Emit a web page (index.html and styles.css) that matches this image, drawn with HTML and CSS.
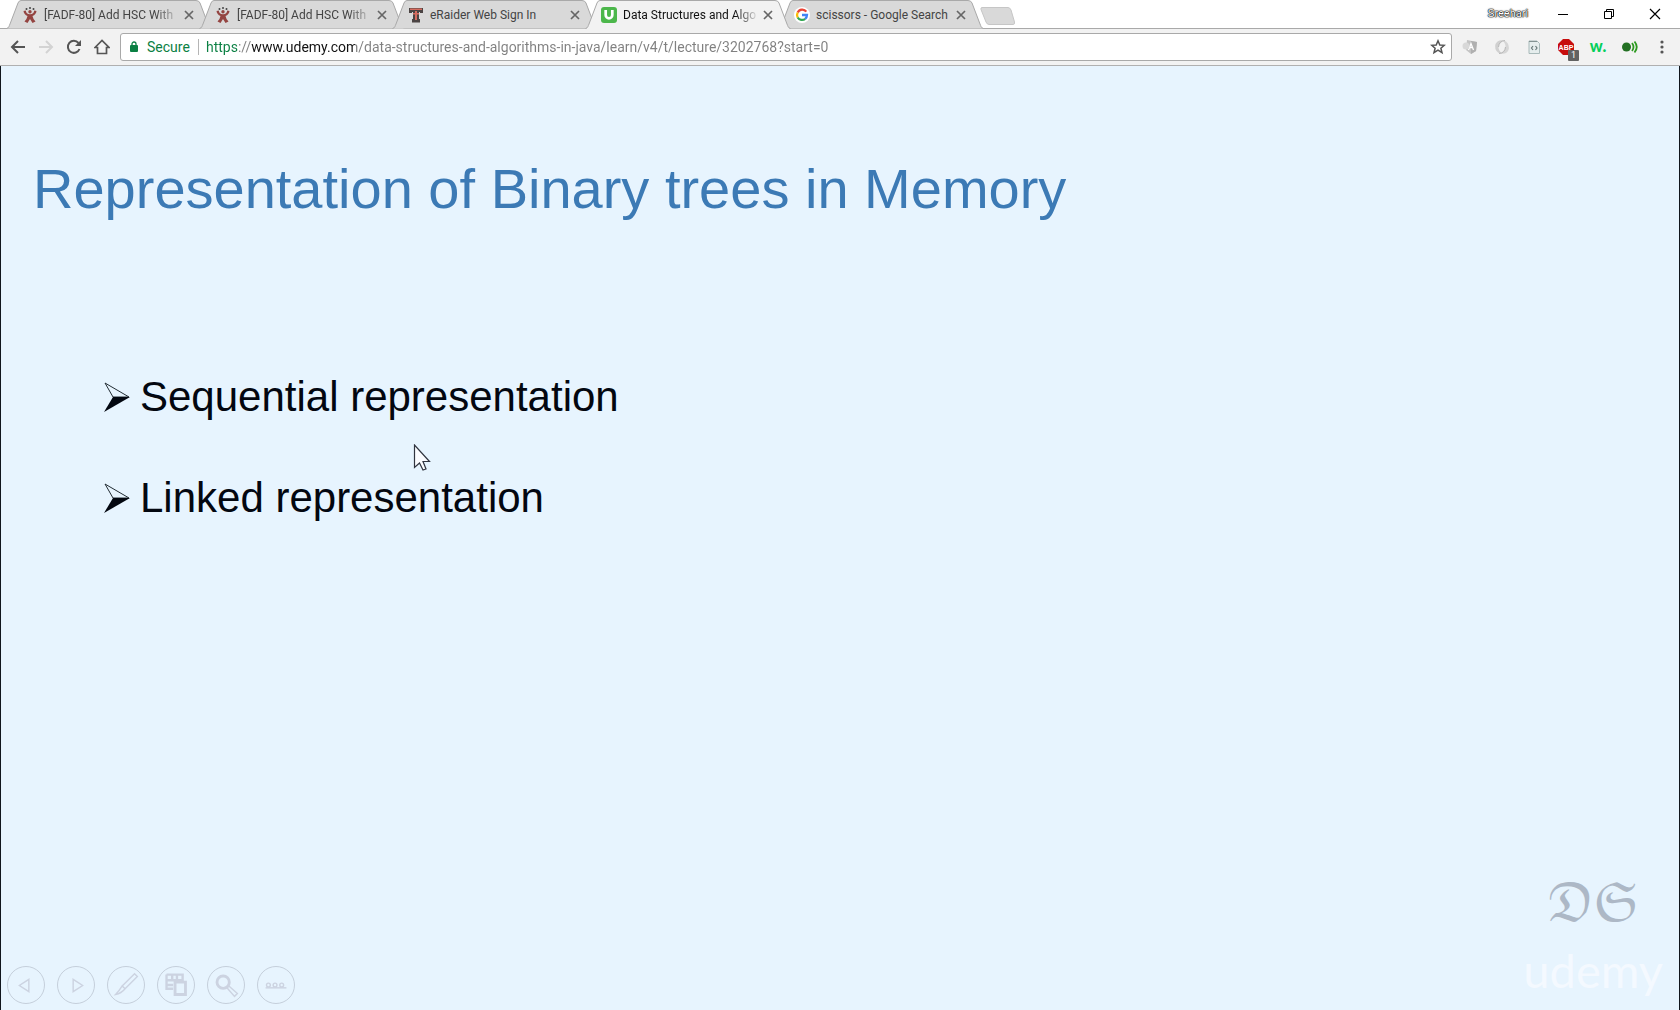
FILE: index.html
```html
<!DOCTYPE html>
<html lang="en">
<head>
<meta charset="utf-8">
<title>Data Structures and Algorithms</title>
<link rel="stylesheet" href="styles.css">
</head>
<body>
<svg class="defs" aria-hidden="true">
  <symbol id="tab-shape" viewBox="0 0 206 29"><path d="M.5 28.5 C3 28 3 26 4 24 L12 3 Q13 .5 15 .5 H190 Q193 .5 194 3 L202 24 C203 26 203 28 205.500 28.500"/></symbol>
  <symbol id="x" viewBox="0 0 10 10"><path d="M1 1 9 9M9 1 1 9" fill="none" stroke="currentColor" stroke-width="1.700"/></symbol>
  <symbol id="jira" viewBox="0 0 16 16"><g fill="#444"><circle cx="4.500" cy="2" r="1"/><circle cx="8" cy="1" r="1"/><circle cx="11.500" cy="2" r="1"/></g><g fill="#944441"><circle cx="8" cy="4.800" r="1.700"/><path d="M1.500 4 3.800 3.500Q4 7 8 7.200 12 7 12.200 3.500L14.500 4Q14 7.500 10.500 9 11 12 13.500 14.500L10.500 16 8 12 5.500 16 2.500 14.500Q5 12 5.500 9 2 7.500 1.500 4Z"/></g></symbol>
  <symbol id="google" viewBox="0 0 16 16"><circle cx="8" cy="8" r="8" fill="#fff"/><g fill="none" stroke-width="2.300"><path d="M12.300 4.600A5 5 0 0 0 3.700 5.500" stroke="#ea4335"/><path d="M3.700 5.500A5 5 0 0 0 3.700 10.500" stroke="#fbbc05"/><path d="M3.700 10.500A5 5 0 0 0 11.200 11.800" stroke="#34a853"/><path d="M11.200 11.800A5 5 0 0 0 13 8H8" stroke="#4285f4"/></g></symbol>
  <symbol id="arrow" viewBox="0 0 28 32"><path d="M2 2 26 16H10Z" fill="#e7f4fe" stroke="#222c33" stroke-width="1"/><path d="M10 16H27L1 31Z" fill="#030710"/></symbol>
</svg>

<header class="browser">
  <div class="strip">
    <div class="tabs" role="tablist">
      <div class="tab"><svg class="shape"><use href="#tab-shape"/></svg>
        <svg class="fav"><use href="#jira"/></svg><button class="name faded" role="tab">[FADF-80] Add HSC With</button><button class="close" aria-label="Close tab"><svg><use href="#x"/></svg></button></div>
      <div class="tab"><svg class="shape"><use href="#tab-shape"/></svg>
        <svg class="fav"><use href="#jira"/></svg><button class="name faded" role="tab">[FADF-80] Add HSC With</button><button class="close" aria-label="Close tab"><svg><use href="#x"/></svg></button></div>
      <div class="tab"><svg class="shape"><use href="#tab-shape"/></svg>
        <svg class="fav" viewBox="0 0 16 16"><path d="M1 1H15V6H12V5H11V12H12V15.500H4V12H5V5H4V6H1Z" fill="#4b4443"/><path d="M2 1.500H14V3H2ZM5 6H11V7.500H5ZM7 4H9V13H7Z" fill="#d66b5f"/></svg><button class="name" role="tab">eRaider Web Sign In</button><button class="close" aria-label="Close tab"><svg><use href="#x"/></svg></button></div>
      <div class="tab active"><svg class="shape"><use href="#tab-shape"/></svg>
        <svg class="fav" viewBox="0 0 16 16"><rect width="16" height="16" rx="3" fill="#4cb74b"/><path d="M4.700 3V8A3.300 3.300 0 0 0 11.300 8V3" fill="none" stroke="#fff" stroke-width="2.700"/></svg><button class="name faded" role="tab" aria-selected="true">Data Structures and Algo</button><button class="close" aria-label="Close tab"><svg><use href="#x"/></svg></button></div>
      <div class="tab"><svg class="shape"><use href="#tab-shape"/></svg>
        <svg class="fav"><use href="#google"/></svg><button class="name" role="tab">scissors - Google Search</button><button class="close" aria-label="Close tab"><svg><use href="#x"/></svg></button></div>
    </div>
    <button class="new-tab" aria-label="New tab"><svg viewBox="0 0 36 18"><path d="M2 .5H28Q30 .5 31 3L34.500 15Q35 17.500 33 17.500H9Q7 17.500 6 15L1 2.500Q.5.5 2 .5Z" fill="#d9d9d9" stroke="#c6c6c6"/></svg></button>
    <div class="window">
      <button class="profile">Sreehari</button>
      <button aria-label="Minimize"><svg viewBox="0 0 12 12"><path d="M1 6.500H11" stroke="#000"/></svg></button>
      <button aria-label="Restore"><svg viewBox="0 0 12 12"><path d="M1.500 3.500H8.500V10.500H1.500ZM3.500 3V1.500H10.500V8.500H9" fill="none" stroke="#000"/></svg></button>
      <button aria-label="Close window"><svg viewBox="0 0 12 12"><path d="M1 1 11 11M11 1 1 11" stroke="#000" stroke-width="1.200"/></svg></button>
    </div>
  </div>

  <div class="toolbar">
    <button aria-label="Back"><svg viewBox="0 0 16 16"><path d="M15 8H2M8 2 2 8 8 14" fill="none" stroke="#555" stroke-width="2"/></svg></button>
    <button aria-label="Forward"><svg viewBox="0 0 16 16"><path d="M1 8H14M8 2 14 8 8 14" fill="none" stroke="#d3d3d3" stroke-width="2"/></svg></button>
    <button aria-label="Reload"><svg viewBox="0 0 16 16"><path d="M13.500 10A6 6 0 1 1 12.500 4" fill="none" stroke="#555" stroke-width="2"/><path d="M15 1V7H9Z" fill="#555"/></svg></button>
    <button aria-label="Home"><svg viewBox="0 0 16 16"><path d="M1 8.500 8 1.500 15 8.500H12.500V14.500H3.500V8.500Z" fill="none" stroke="#555" stroke-width="1.700"/></svg></button>
    <div class="omnibox">
      <svg class="lock" viewBox="0 0 8 12"><path d="M2 6V3A2 2 0 0 1 6 3V6" fill="none" stroke="#0b8043" stroke-width="1.300"/><rect y="4" width="8" height="7" rx="1" fill="#0b8043"/></svg>
      <label class="secure" for="url">Secure</label>
      <input id="url" class="url" type="text" value="https://www.udemy.com/data-structures-and-algorithms-in-java/learn/v4/t/lecture/3202768?start=0">
      <button class="star" aria-label="Bookmark"><svg viewBox="0 0 16 16"><path d="M8 1.800 9.800 6 14.300 6.300 10.900 9.200 12 13.700 8 11.200 4 13.700 5.100 9.200 1.700 6.300 6.200 6Z" fill="none" stroke="#555" stroke-width="1.500"/></svg></button>
    </div>
    <div class="extensions">
      <button aria-label="Angular tools"><svg viewBox="0 0 16 16"><path d="M5 1 15 3 14 12 9 15 4 11Z" fill="#c4c4c4"/><path d="M9 2 15 3 14 12 9 15Z" fill="#b0b0b0"/><path d="M6.500 11 9 4.500 11.500 11M7.500 8.500H10.500" fill="none" stroke="#fff" stroke-width="1.300"/><circle cx="4" cy="7" r="3.500" fill="#d8d8d8"/></svg></button>
      <button aria-label="Swirl"><svg viewBox="0 0 16 16"><path d="M10 1.500Q4 0 1.500 5 0 10 4 13.500 6 15 8 14.500 4 11 4.500 7 6 3 10 1.500Z" fill="#d0d0d0"/><path d="M9 2Q12 5 11.500 9 10 13 6 14.500 12 16 14.500 11 16 6 12 2.500 10.500 1.500 9 2Z" fill="#d6d6d6"/><path d="M11 1.500Q5 2 4.500 8M5 14.500Q11 14 11.500 8" fill="none" stroke="#b8b8b8"/></svg></button>
      <button aria-label="Source viewer"><svg viewBox="0 0 16 16"><path d="M3 2H11L13.500 4.500V14.500H3Z" fill="#e5eded" stroke="#a8baba"/><path d="M3 2.500H11" stroke="#839393"/><path d="M7 7 5.500 9 7 11M9.500 7 11 9 9.500 11" fill="none" stroke="#667878" stroke-width="1.200"/></svg></button>
      <button class="abp" aria-label="Adblock Plus"><svg viewBox="0 0 16 16"><path d="M5 0H11L16 5V11L11 16H5L0 11V5Z" fill="#c70d0d"/><text x="8" y="11" text-anchor="middle">ABP</text></svg><span class="badge">1</span></button>
      <button class="wot">w.</button>
      <button aria-label="Sound"><svg viewBox="0 0 16 16"><circle cx="4.500" cy="8" r="4.500" fill="#237023"/><path d="M10 4Q13 8 10 12M12.500 2.500Q17 8 12.500 13.500" fill="none" stroke="#2d9a20" stroke-width="1.800"/></svg></button>
      <button aria-label="Menu"><svg viewBox="0 0 16 16" fill="#555"><circle cx="8" cy="3" r="1.600"/><circle cx="8" cy="8" r="1.600"/><circle cx="8" cy="13" r="1.600"/></svg></button>
    </div>
  </div>
</header>

<main class="slide">
  <h1>Representation of Binary trees in Memory</h1>
  <ul class="points">
    <li><svg><use href="#arrow"/></svg>Sequential representation</li>
    <li><svg><use href="#arrow"/></svg>Linked representation</li>
  </ul>
  <svg class="cursor" viewBox="0 0 18 28" aria-hidden="true"><path d="M1.500 1V23.500L6.500 19 10 26 13 25 10 17.500H16.500Z" fill="#fbfcff" stroke="#30343f" stroke-width="1.200"/></svg>
  <footer>
    <nav class="controls" aria-label="Slide show">
      <button aria-label="Previous"><svg viewBox="0 0 38 38"><path d="M22 13V26L12 19.500Z"/></svg></button>
      <button aria-label="Next"><svg viewBox="0 0 38 38"><path d="M16 13V26L26 19.500Z"/></svg></button>
      <button aria-label="Pen"><svg viewBox="0 0 38 38"><path d="M28 7 31 10 18 23 15 20ZM15 20 18 23Q14 28 8 29 12 25 15 20Z"/></svg></button>
      <button aria-label="All slides"><svg viewBox="0 0 38 38"><path d="M9 8H26V15M9 8V23H16M15 8V14M20 8V14M9 14H26M9 19H16" stroke-width="2.500"/><path d="M18 16H29V29H18Z" stroke-width="3"/></svg></button>
      <button aria-label="Zoom"><svg viewBox="0 0 38 38"><circle cx="16" cy="16" r="6.500" stroke-width="3"/><path d="M20 22 22 20 31 28 28 31Z"/></svg></button>
      <button aria-label="More"><svg viewBox="0 0 38 38"><circle cx="11" cy="19" r="2"/><circle cx="18" cy="19" r="2"/><circle cx="25" cy="19" r="2"/><path d="M8 22H30"/></svg></button>
    </nav>
    <div class="brands">
      <span class="ds">𝔇𝔖</span>
      <span class="udemy">udemy</span>
    </div>
  </footer>
</main>
</body>
</html>
```
FILE: styles.css
```css
* { box-sizing: border-box; }
body {
  margin: 0;
  min-height: 100vh;
  display: flex;
  flex-direction: column;
  background: #e7f4fe;
  font: 12px/16px Roboto, "Open Sans", sans-serif;
}
button {
  padding: 0;
  border: 0;
  background: none;
  font: inherit;
  color: inherit;
}
svg { display: block; }
.defs { position: absolute; width: 0; height: 0; }

.strip {
  display: flex;
  height: 29px;
  padding-left: 6px;
  background: linear-gradient(#a9a9a9, #a9a9a9) bottom / 100% 1px no-repeat #fff;
}
.tabs { display: flex; }
.tab {
  position: relative;
  display: flex;
  align-items: center;
  width: 206px;
  height: 29px;
  margin-right: -13px;
  padding: 0 16px;
  color: #444;
}
.active { z-index: 1; color: #111; }
.shape {
  position: absolute;
  inset: 0;
  width: 206px;
  height: 29px;
  fill: #d9d9d9;
  stroke: #a9a9a9;
}
.active .shape { fill: #f2f2f2; }
.active::after {
  content: "";
  position: absolute;
  left: 2px;
  right: 2px;
  bottom: 0;
  height: 1px;
  background: #f2f2f2;
}
.fav { position: relative; width: 16px; height: 16px; margin-right: 6px; }
.name {
  position: relative;
  width: 136px;
  text-align: left;
  white-space: nowrap;
}
.faded { mask-image: linear-gradient(to right, #000 112px, transparent 136px); }
.close { position: relative; margin-left: 4px; color: #666; }
.close svg { width: 10px; height: 10px; }
.new-tab { width: 36px; height: 18px; margin: 7px 0 0 9px; }
.window { display: flex; margin-left: auto; margin-right: 2px; height: 27px; }
.window button { width: 46px; }
.window svg { width: 12px; height: 12px; margin: auto; }
.window .profile {
  width: 64px;
  font-size: 11px;
  color: #fff;
  text-shadow: 0 0 1px #000, 0 0 1px #000, 0 0 1px #000, 0 0 2px #333;
}

.toolbar {
  display: flex;
  align-items: center;
  height: 37px;
  padding: 0 4px;
  background: #f2f2f2;
  border-bottom: 1px solid #b0b0b0;
}
.toolbar button { display: grid; place-items: center; width: 28px; height: 28px; }
.toolbar button svg { width: 16px; height: 16px; }
.omnibox {
  flex: 1;
  display: flex;
  align-items: center;
  height: 28px;
  margin-left: 4px;
  padding-left: 9px;
  border: 1px solid #a9a9a9;
  border-radius: 3px;
  background: #fff;
  font-size: 14px;
}
.lock { width: 8px; height: 12px; }
.secure {
  width: 61px;
  padding-left: 9px;
  border-right: 1px solid #b5b5b5;
  color: #0b8043;
}
.url {
  flex: 1;
  min-width: 0;
  padding: 0 0 0 7px;
  border: 0;
  outline: 0;
  font: inherit;
  color: transparent;
  background: linear-gradient(to right, #0b8043 39px, #808080 39px 52px, #111 52px 156px, #808080 156px);
  background-clip: text;
}
.toolbar .star { margin-right: -1px; }
.extensions { display: flex; gap: 4px; margin-left: 4px; }
.abp { position: relative; }
.abp text { fill: #fff; font: bold 7px "Liberation Sans", sans-serif; }
.badge {
  position: absolute;
  right: 1px;
  bottom: 0;
  width: 11px;
  height: 11px;
  border-radius: 1px;
  background: #626262;
  color: #fff;
  font-size: 9px;
  line-height: 11px;
}
.toolbar .wot { color: #05cf5b; font: 900 16px/20px Lato, sans-serif; padding-bottom: 3px; }

.slide {
  position: relative;
  flex: 1;
  display: flex;
  flex-direction: column;
  border: solid #10151c;
  border-width: 0 1px;
  font-family: "Liberation Sans", Arial, sans-serif;
}
h1 {
  margin: 91px 0 0 32px;
  font-size: 56px;
  line-height: 64px;
  font-weight: 400;
  color: #3c7ab5;
}
.points { margin: 125px 0 0; padding: 0 0 0 102px; list-style: none; color: #030710; }
.points li {
  display: flex;
  align-items: center;
  gap: 9px;
  height: 101px;
  font-size: 42px;
  line-height: 48px;
}
.points svg { width: 28px; height: 32px; }
.cursor { position: absolute; left: 412px; top: 378px; width: 18px; height: 28px; }
footer {
  display: flex;
  justify-content: space-between;
  align-items: flex-end;
  margin-top: auto;
  padding: 0 16px 6px 6px;
}
.controls { display: flex; gap: 12px; }
.controls button {
  width: 38px;
  height: 38px;
  border: 1px solid #c5cfdb;
  border-radius: 50%;
}
.controls svg { width: 36px; height: 36px; fill: none; stroke: #ccd3e1; stroke-width: 1.5; }
.brands { display: flex; flex-direction: column; align-items: flex-end; }
.ds {
  margin-right: 24px;
  font: 48px/64px "DejaVu Math TeX Gyre", "DejaVu Sans", serif;
  color: #adb8c6;
}
.udemy { padding-bottom: 2px; font: 47px/64px Lato, sans-serif; color: #f4f9ff; }
```
